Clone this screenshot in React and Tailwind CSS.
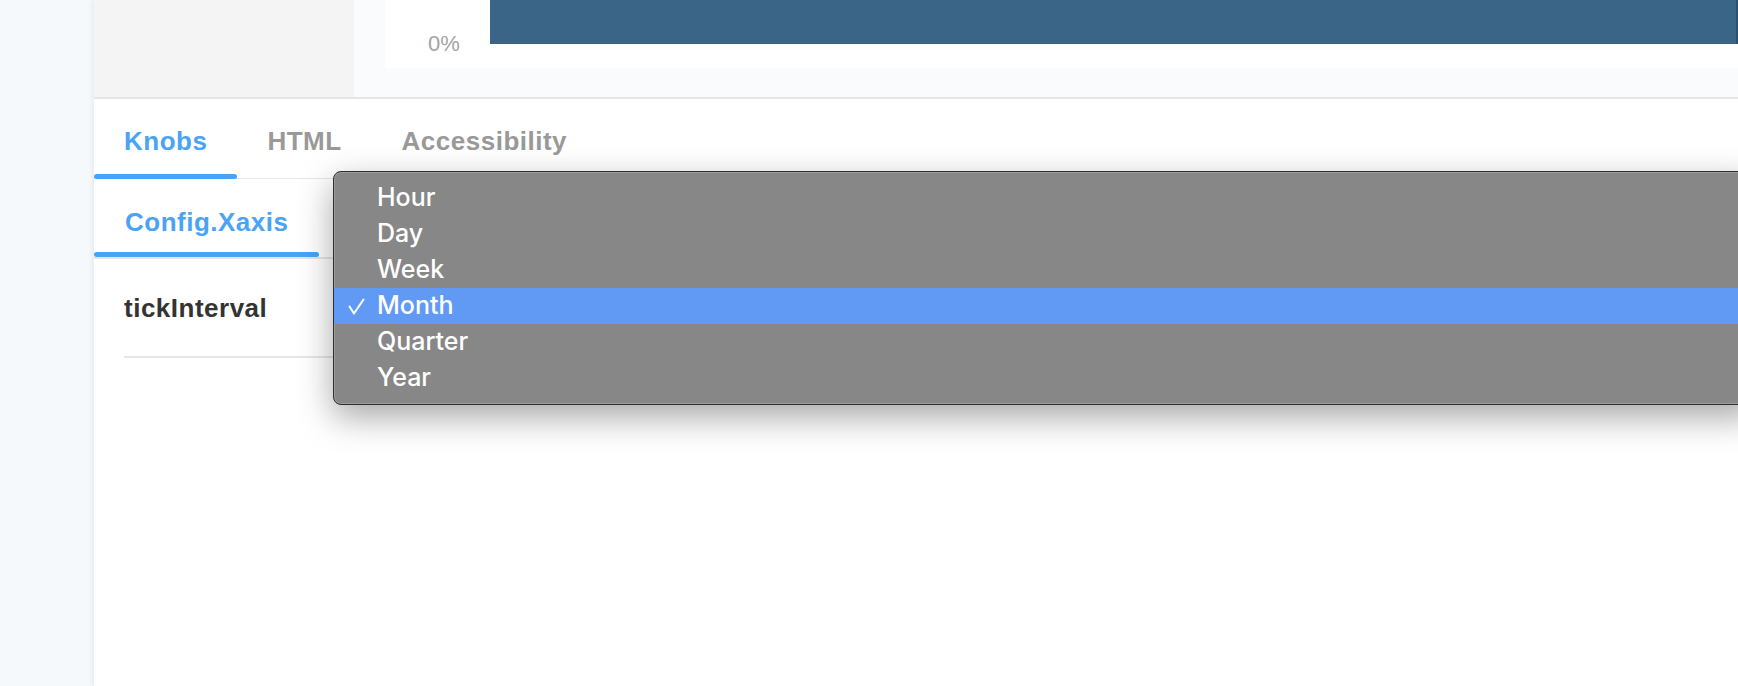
import React from 'react';

// Storybook-style knobs panel with an open native select popup
const tabs = [
  { label: 'Knobs', active: true },
  { label: 'HTML' },
  { label: 'Accessibility' },
];

const options = ['Hour', 'Day', 'Week', 'Month', 'Quarter', 'Year'];

const sans = { fontFamily: '"Liberation Sans", Arial, sans-serif' };

export default function App() {
  const selected = 'Month';

  return (
    <div className="relative flex h-[686px] w-full overflow-hidden bg-white" style={sans}>
      {/* Sidebar */}
      <div className="w-[94px] shrink-0 bg-[#f6f9fc]" />

      {/* Main */}
      <div className="flex min-w-0 flex-1 flex-col bg-white shadow-[-2px_0_5px_rgba(0,0,0,0.06)]">
        {/* Preview area */}
        <div className="flex h-[97px] shrink-0">
          <div className="w-[260px] bg-[#f4f4f4]" />
          <div className="flex-1 bg-[#fafbfc] pl-[31px]">
            <div className="flex h-[68px] bg-white">
              <div className="w-[105px] pl-[43px] pt-[32px]">
                <span className="block text-[22px] leading-[24px] text-[#a3a3a3]">0%</span>
              </div>
              <div className="h-[44px] flex-1 border-r-2 border-[#2f506c] bg-[#3a6587]" />
            </div>
          </div>
        </div>
        <div className="h-[2px] shrink-0 bg-[#e6e6e6]" />

        {/* Addon tabs */}
        <div className="flex h-[80px] shrink-0 border-b border-[#e6e6e6]">
          {tabs.map((t) => (
            <div key={t.label} className="-mb-px flex h-[80px] flex-col px-[30px]">
              <span
                className={`pt-[27px] text-[26px] font-bold leading-[30px] tracking-[0.5px] ${
                  t.active ? 'text-[#4aa3f5]' : 'text-[#999999]'
                }`}
              >
                {t.label}
              </span>
              <div
                className={`mt-auto -mx-[30px] h-[5px] rounded-[3px] ${
                  t.active ? 'bg-[#4aa3f5]' : 'bg-transparent'
                }`}
              />
            </div>
          ))}
        </div>

        {/* Knob groups */}
        <div className="flex h-[80px] shrink-0 border-b-2 border-[#e6e6e6]">
          <div className="-mb-[2px] flex h-[80px] flex-col px-[31px]">
            <span className="pt-[28px] text-[26px] font-bold leading-[30px] tracking-[0.5px] text-[#4aa3f5]">
              Config.Xaxis
            </span>
            <div className="mt-auto -mx-[31px] mb-[2px] h-[5px] rounded-[3px] bg-[#4aa3f5]" />
          </div>
        </div>

        {/* Knob row */}
        <div className="ml-[30px] border-b-2 border-[#e6e6e6] pb-[33px] pt-[34px]">
          <span className="block text-[26px] font-bold leading-[30px] tracking-[0.5px] text-[#333333]">
            tickInterval
          </span>
        </div>
      </div>

      {/* Native select popup */}
      <div
        className="absolute left-[333px] right-[-20px] top-[171px] rounded-[8px] border border-[#2e2e2e] bg-[#878787] pb-[8px] pt-[8px] shadow-[0_12px_34px_rgba(0,0,0,0.35),inset_0_0_0_1px_rgba(255,255,255,0.18)]"
        style={{ fontFamily: 'Inter, "Liberation Sans", sans-serif' }}
      >
        {options.map((o) => (
          <div
            key={o}
            className={`flex h-[36px] items-center text-[25px] font-medium text-white ${
              o === selected ? 'bg-[#619af5]' : ''
            }`}
          >
            <div className="flex w-[43px] justify-center pl-[2px]">
              {o === selected && (
                <svg width="17" height="17" viewBox="0 0 17 17" fill="none">
                  <path d="M1.5 8.5 L6 15.5 L15.5 1.5" stroke="white" strokeWidth="2" strokeLinecap="round" strokeLinejoin="round" />
                </svg>
              )}
            </div>
            <span>{o}</span>
          </div>
        ))}
      </div>
    </div>
  );
}
